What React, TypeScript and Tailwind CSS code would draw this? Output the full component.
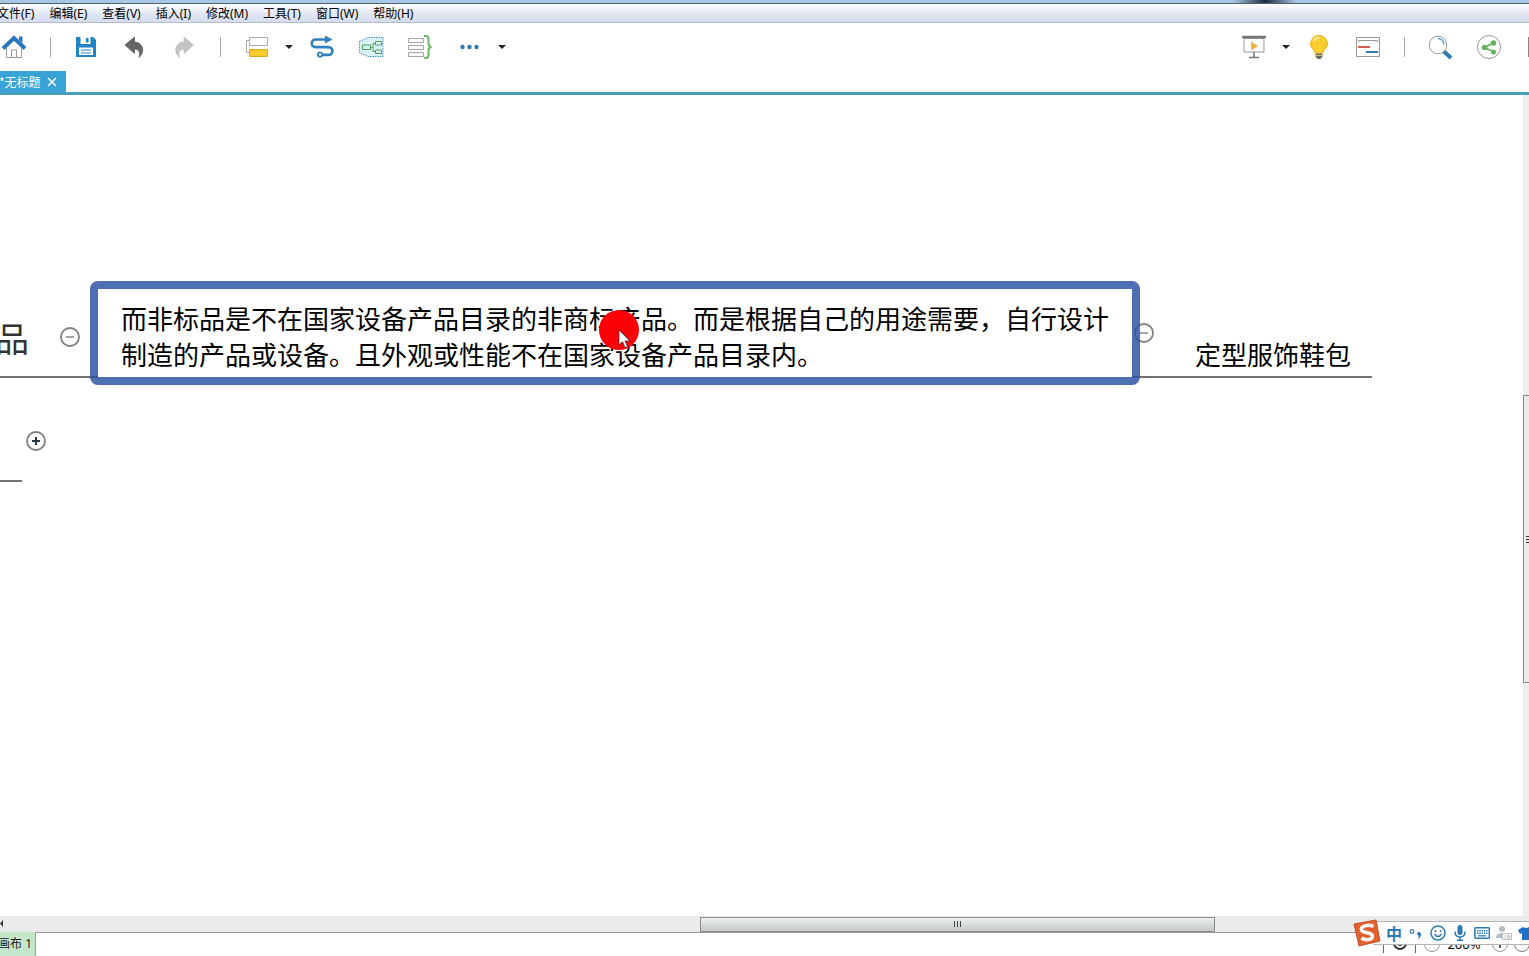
import React from 'react';

type NodeProps = { className: string; children: React.ReactNode };

const menus = ['文件(F)', '编辑(E)', '查看(V)', '插入(I)', '修改(M)', '工具(T)', '窗口(W)', '帮助(H)'];

const ToolButton = ({ label, children }: { label: string; children: React.ReactNode }) => (
  <button aria-label={label} className="flex h-7 w-7 shrink-0 items-center justify-center">
    <svg viewBox="0 0 28 28" className="h-7 w-7" fill="none">
      {children}
    </svg>
  </button>
);

const Caret = ({ label }: { label: string }) => (
  <button aria-label={label} className="flex h-7 w-3 shrink-0 items-center justify-center">
    <svg viewBox="0 0 8 4" className="h-1 w-2" fill="#222">
      <path d="M0 0h8L4 4z" />
    </svg>
  </button>
);

const Divider = () => <span className="ml-px h-5 w-px shrink-0 bg-[#a9a9a9]" />;

const Toggle = ({ className, open }: { className: string; open: boolean }) => (
  <button aria-label={open ? '折叠' : '展开'} className={`absolute h-5 w-5 ${className}`}>
    <svg viewBox="0 0 20 20" className="h-5 w-5" fill="none">
      <circle cx="10" cy="10" r="9" fill="#fff" stroke="#808080" strokeWidth="1.800" />
      {open ? (
        <path d="M6 10h8" stroke="#7c8494" strokeWidth="1.500" />
      ) : (
        <path d="M6 10h8M10 6v8" stroke="#2a3140" strokeWidth="2" />
      )}
    </svg>
  </button>
);

const Topic = ({ className, children }: NodeProps) => (
  <div className={`absolute whitespace-nowrap ${className}`}>{children}</div>
);

const Header = () => (
  <header className="shrink-0">
    <div className="h-[3px] overflow-hidden bg-[#a9c8e4]">
      <div className="ml-auto mr-[232px] h-[3px] w-16 bg-linear-to-r from-transparent via-[#1d2c42] to-transparent" />
    </div>
    <nav className="flex h-5 items-center gap-[15px] border-t border-b border-t-[#4c6076] border-b-[#b6bccc] bg-linear-to-b from-white via-[#e4e9f5] to-[#d5dcef] pt-[2px] font-['Noto_Sans','Noto_Sans_CJK_SC',sans-serif] text-xs text-black">
      {menus.map((menu, i) => (
        <button key={menu} className={i === 0 ? '-ml-[3px]' : ''}>
          {menu}
        </button>
      ))}
    </nav>

    {/* Toolbar */}
    <div className="flex h-12 items-center justify-between">
      <div className="flex items-center gap-[21px]">
        <ToolButton label="主页">
          <path d="M6.500 14v10.500h15V14L14 7z" fill="#fff" stroke="#999" />
          <path d="M11.500 24V17h5v7" stroke="#999" />
          <path d="M3 15.500 14 5l11 10.500" stroke="#2c77be" strokeWidth="4" />
          <path d="M19 3.500h3.500V10L19 7z" fill="#2c77be" />
        </ToolButton>
        <Divider />
        <ToolButton label="保存">
          <path d="M4 4h17l3 3v17H4z" fill="#2382c4" />
          <path d="M8.500 4h10v7h-10z" fill="#fff" />
          <path d="M14 5h2.500v4.500H14z" fill="#2382c4" />
          <path d="M7 14.500h14V22H7z" fill="#fff" />
          <path d="M9 17h10M9 20h10" stroke="#2382c4" />
        </ToolButton>
        <ToolButton label="撤销">
          <path d="M4 12 13.500 4v5c8 .5 11.500 9 4.500 15.500 1.500-5 0-8-4.500-8.500v4.500z" fill="#666" stroke="#444" strokeWidth=".6" />
        </ToolButton>
        <ToolButton label="重做">
          <path d="M23.500 12 14 4v5C6 9.500 2.500 18 9.500 24.500 8 19.500 9.500 16.500 14 16v4.500z" fill="#c4c4c4" stroke="#b4b4b4" strokeWidth=".6" />
        </ToolButton>
        <Divider />
        <div className="-mr-2 flex gap-[13px]">
          <ToolButton label="主题">
            <path d="M7 7.500H4.500v12H8" stroke="#aaa" />
            <path d="M7.500 4.500h18v8h-18z" fill="#fff" stroke="#aaa" />
            <path d="M7.500 16.500h18v7h-18z" fill="#f9c92e" stroke="#dda91c" />
          </ToolButton>
          <Caret label="更多主题" />
        </div>
        <ToolButton label="联系">
          <path d="M18 6.500H7.500a3.800 3.800 0 0 0 0 7.600h13a3.900 3.900 0 0 1 0 7.800H14" stroke="#2d7fc0" strokeWidth="2.600" />
          <path d="M17 2.500l7.500 4-7.500 4z" fill="#2d7fc0" />
          <circle cx="12" cy="21.500" r="2.200" fill="#fff" stroke="#2d7fc0" strokeWidth="1.800" />
        </ToolButton>
        <ToolButton label="外框">
          <path d="M2.500 8.500 11 4.500h15v19H11l-8.500-4z" fill="#daf1f8" stroke="#3f8fc0" strokeDasharray="1.500 1" />
          <path d="M5.500 12h8v4.500h-8zM18.500 8.500h6v3.500h-6zM18.500 17h6v3.500h-6zM13.500 14.500H16M18.500 10.500H16v8h2.500" stroke="#4fa257" />
        </ToolButton>
        <ToolButton label="概要">
          <path d="M2.500 5.500h15v4h-15zM2.500 12.500h15v4h-15zM2.500 19.500h15v4h-15z" stroke="#aaa4ae" />
          <path d="M18 3h2q2.500 0 2.500 3v4.500q0 3 3 3.500-3 .5-3 3.500V22q0 3-2.500 3h-2" stroke="#6fb56b" strokeWidth="2" />
        </ToolButton>
        <div className="flex gap-[13px]">
          <ToolButton label="更多">
            <circle cx="7.500" cy="14" r="2.200" fill="#2f78ac" />
            <circle cx="14.500" cy="14" r="2.200" fill="#2f78ac" />
            <circle cx="21.500" cy="14" r="2.200" fill="#2f78ac" />
          </ToolButton>
          <Caret label="更多工具" />
        </div>
      </div>

      <div className="flex items-center gap-[21px]">
        <div className="-mr-2 flex gap-3">
          <ToolButton label="演示">
            <path d="M4 5.500h20V19H4z" fill="#fff" stroke="#999" />
            <path d="M2 4h24" stroke="#777" strokeWidth="2.500" />
            <path d="M11 8.500l7 4.500-7 4.500z" fill="#eeb042" />
            <path d="M14 19v5M9 24.500h10" stroke="#777" strokeWidth="1.500" />
          </ToolButton>
          <Caret label="演示选项" />
        </div>
        <ToolButton label="头脑风暴">
          <path d="M14 2.500a8.500 8.500 0 0 0-8.500 8.500c0 4 4 5.500 4.500 9h8c.5-3.500 4.500-5 4.500-9A8.500 8.500 0 0 0 14 2.500z" fill="#fbce2e" stroke="#e5b124" />
          <path d="M9 8q1.500-3 5-3.500" stroke="#fff0a0" strokeWidth="2" />
          <path d="M10.500 20.500h7v3l-2 2.500h-3l-2-2.500z" fill="#6f6a57" />
          <path d="M10.500 22.500h7" stroke="#d2c079" />
        </ToolButton>
        <ToolButton label="甘特图">
          <path d="M2.500 4.500h23v19h-23z" stroke="#999" />
          <path d="M4.500 9V7.500h19V9" stroke="#999" />
          <path d="M4 14h12" stroke="#d45c50" strokeWidth="2" />
          <path d="M12 19h12" stroke="#2f7caa" strokeWidth="2" />
        </ToolButton>
        <Divider />
        <ToolButton label="搜索">
          <circle cx="12" cy="12" r="8.800" fill="#fff" stroke="#999" />
          <path d="M12 5.500q5.500.5 6 6" stroke="#5fa8d4" strokeWidth="1.500" />
          <path d="M18 18.500l7 6.500" stroke="#2c78b4" strokeWidth="3.800" />
        </ToolButton>
        <ToolButton label="分享">
          <circle cx="14" cy="14" r="11.500" fill="#fff" stroke="#999" />
          <path d="M18.500 10l-9 4.500 9 4.500" stroke="#62b35b" strokeWidth="1.800" />
          <circle cx="18.500" cy="10" r="2.800" fill="#62b35b" />
          <circle cx="9.500" cy="14.500" r="2.800" fill="#62b35b" />
          <circle cx="18.500" cy="19" r="2.500" fill="#62b35b" />
        </ToolButton>
        <span className="ml-1 h-5 w-px shrink-0 bg-[#888]" />
      </div>
    </div>

    {/* Document tabs */}
    <div className="flex h-6 border-b-[3px] border-[#4a9dbd] text-xs text-white">
      <div className="flex w-[66px] items-center gap-[3px] bg-[#38a3d6]">
        <button className="-ml-px whitespace-nowrap">*无标题</button>
        <button aria-label="关闭" className="flex h-4 w-4 items-center justify-center">
          <svg viewBox="0 0 10 10" className="h-[10px] w-[10px]" stroke="#fff" strokeWidth="1.500">
            <path d="M1 1l8 8M9 1L1 9" />
          </svg>
        </button>
      </div>
    </div>
  </header>
);

const MindMap = () => (
  <main className="relative flex-1 overflow-hidden bg-white text-[26px] leading-9 text-black">
    {/* Branch underlines */}
    <div className="absolute left-0 top-[281px] h-[2px] w-[98px] bg-[#737373]" />
    <div className="absolute left-[1132px] top-[281px] h-[2px] w-[240px] bg-[#737373]" />
    <div className="absolute left-0 top-[385px] h-[2px] w-[22px] bg-[#737373]" />
    <Topic className="-left-[5px] top-[225px] text-[34px] text-[#333]">品</Topic>
    <Toggle className="left-[60px] top-[232px]" open />
    <Toggle className="left-[26px] top-[336px]" open={false} />
    <Toggle className="left-[1134px] top-[228px]" open />
    <Topic className="left-[90px] top-[186px] h-[104px] w-[1050px] rounded-lg border-8 border-[#274fa0]/82 pl-[23px] pt-[11px]">
      而非标品是不在国家设备产品目录的非商标产品。而是根据自己的用途需要，自行设计
      <br />
      制造的产品或设备。且外观或性能不在国家设备产品目录内。
    </Topic>
    <Topic className="left-[1195px] top-[241px]">定型服饰鞋包</Topic>

    {/* Click highlight and pointer */}
    <div className="absolute left-[599px] top-[215px] h-10 w-10 rounded-full bg-[#fb0007]" />
    <svg viewBox="0 0 14 20" className="absolute left-[618px] top-[234px] h-5 w-[14px]">
      <path d="M1 1v15l3.500-3.300L7 18.500l2.500-1L7 12h5z" fill="#fff" stroke="#333" strokeWidth=".8" />
    </svg>
  </main>
);

const ImeBar = () => (
  <div className="absolute -top-[14px] right-0 flex h-7 w-[176px] items-center">
    <svg viewBox="0 0 28 28" className="z-10 h-7 w-7 shrink-0">
      <path d="M1 5 23 1l4 21-21 5z" fill="#e0602f" stroke="#c44e26" />
      <path d="M20.500 7.500C15 5 7.500 7 8.500 11c1 3.500 11 2 11 6 0 4-7 5-11 2" fill="none" stroke="#fff" strokeWidth="3.500" />
    </svg>
    <div className="-ml-2 flex h-6 flex-1 items-center gap-[6px] overflow-hidden border-y border-[#b5b5b5] bg-white pl-[13px] text-[#2b7ab5]">
      <button className="w-4 shrink-0 text-base leading-4 font-bold">中</button>
      <svg viewBox="0 0 16 16" className="h-4 w-4 shrink-0">
        <circle cx="4" cy="6.500" r="1.800" fill="none" stroke="#2b7ab5" strokeWidth="1.200" />
        <path d="M9 8.500q0-1.500 1.800-1.500 2.200 0 2.200 2.200 0 3.300-3.500 5 1.300-1.700 1.300-3.400Q9 10.500 9 8.500z" fill="#2b7ab5" />
      </svg>
      <svg viewBox="0 0 16 16" className="h-4 w-4 shrink-0" fill="none" stroke="#2b7ab5" strokeWidth="1.500">
        <circle cx="8" cy="8" r="7" />
        <path d="M4.500 9q3.500 5 7 0M5.500 5v2M10.500 5v2" />
      </svg>
      <svg viewBox="0 0 16 16" className="h-4 w-4 shrink-0">
        <rect x="5.500" y="0" width="5" height="10" rx="2.500" fill="#2b7ab5" />
        <path d="M3 6.500q0 5.500 5 5.500t5-5.500M8 12v3M5 15.200h6" fill="none" stroke="#2b7ab5" strokeWidth="1.500" />
      </svg>
      <svg viewBox="0 0 16 16" className="h-4 w-4 shrink-0">
        <rect x=".8" y="2.800" width="14.500" height="10.500" rx="1" fill="#fff" stroke="#2b7ab5" strokeWidth="1.500" />
        <path d="M3 5.800h10.500M3 8.200h10.500" stroke="#2b7ab5" strokeWidth="1.400" strokeDasharray="1.500 .8" />
        <path d="M4 10.800h8" stroke="#2b7ab5" strokeWidth="1.300" />
      </svg>
      <svg viewBox="0 0 16 16" className="h-4 w-4 shrink-0">
        <circle cx="6" cy="4" r="3" fill="#b4bcc6" />
        <path d="M0 13q0-5 6-5t6 5z" fill="#b4bcc6" />
        <path d="M6.500 8.500h9v6h-9z" fill="#fff" stroke="#b4bcc6" />
        <path d="M9 10v3.500M11.500 13h2v-2.500h-2V12h2" fill="none" stroke="#b4bcc6" />
      </svg>
      <svg viewBox="0 0 16 16" className="h-4 w-4 shrink-0">
        <path d="M5 2 0 5l2 4 2-1v7h8V8l2 1 2-4-5-3q-3 2-6 0z" fill="#1f72c4" />
      </svg>
    </div>
  </div>
);

const Footer = () => (
  <footer className="relative flex h-6 shrink-0 items-stretch justify-between border-t border-[#999] bg-white text-xs text-[#222]">
    <button className="-mt-px flex w-9 items-center justify-end border-r border-[#8fa894] bg-[#c5e6cb] pr-[3px] font-['Noto_Sans','Noto_Sans_CJK_SC',sans-serif] whitespace-nowrap">
      画布 1
    </button>
    <div className="-mr-px flex items-center text-[#333]">
      <div className="flex h-5 w-[33px] items-center justify-center self-start border-x border-[#666]">
        <svg viewBox="0 0 16 16" className="h-4 w-4" fill="none" stroke="#333" strokeWidth="2">
          <circle cx="8" cy="8" r="6" />
          <circle cx="8" cy="8" r="2" />
        </svg>
      </div>
      <div className="flex items-center">
        <button aria-label="缩小" className="ml-2 h-4 w-4 rounded-full border border-[#999]" />
        <span className="ml-1 w-10 text-center font-['Noto_Sans',sans-serif] text-[13px] text-black">200%</span>
        <button aria-label="放大" className="ml-2 flex h-4 w-4 items-center justify-center rounded-full border border-[#999]">
          <svg viewBox="0 0 8 8" className="h-2 w-2" stroke="#333" strokeWidth="1.500">
            <path d="M0 4h8M4 0v8" />
          </svg>
        </button>
        <button aria-label="适应画布" className="ml-[6px] flex h-4 w-4 items-center justify-center rounded-full border border-[#777]">
          <svg viewBox="0 0 8 8" className="h-2 w-2" stroke="#333" strokeWidth="2">
            <path d="M0 4h8" />
          </svg>
        </button>
      </div>
    </div>
    <ImeBar />
  </footer>
);

const App = () => (
  <div className="flex h-screen flex-col overflow-hidden bg-white font-['Noto_Sans_CJK_SC',sans-serif]">
    <Header />
    <div className="flex min-h-0 flex-1">
      <MindMap />
      <div className="flex w-[6px] shrink-0 flex-col bg-[#ededed]">
        <div className="flex-[301]" />
        <div className="flex flex-[286] items-center justify-end border-y border-l border-[#888] bg-[#e9eaea]">
          <svg viewBox="0 0 3 8" className="h-2 w-[3px]" stroke="#333">
            <path d="M0 1.500h3M0 4.500h3M0 7.500h3" />
          </svg>
        </div>
        <div className="flex-[234]" />
      </div>
    </div>
    <div className="flex h-4 shrink-0 items-center bg-[#ebebeb]">
      <svg viewBox="0 0 4 8" className="h-2 w-1" fill="#333">
        <path d="M3 0v7L0 3.500z" />
      </svg>
      <div className="flex-[697]" />
      <div className="flex h-[15px] flex-[514] items-center justify-center border border-[#8c8c8c] bg-linear-to-b from-[#eff1f1] to-[#c3c7c7]">
        <svg viewBox="0 0 8 6" className="h-[6px] w-2" stroke="#444">
          <path d="M.5 0v6M3.500 0v6M6.500 0v6" />
        </svg>
      </div>
      <div className="flex-[314]" />
    </div>
    <Footer />
  </div>
);

export default App;
